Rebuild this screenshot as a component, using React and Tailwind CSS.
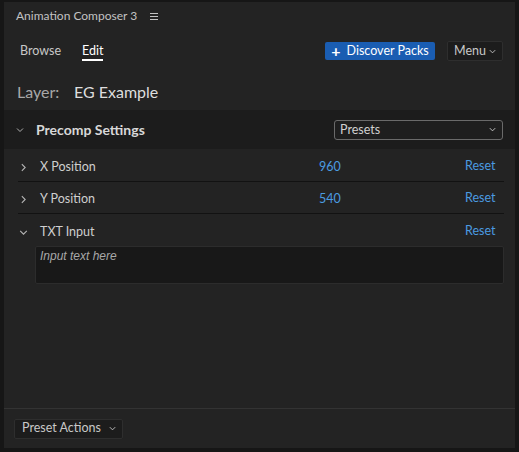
import React from "react";

const Chevron = ({ dir = "down", className = "" }) => (
  <svg viewBox="0 0 10 10" className={className} fill="none" stroke="currentColor" strokeWidth="1">
    {dir === "down" ? <path d="M2 3.5 L5 6.5 L8 3.5" /> : <path d="M3.5 2 L6.5 5 L3.5 8" />}
  </svg>
);

function Row({ label, value, open, border = true }) {
  return (
    <div className={`flex h-[32px] items-center pt-[4px] ${border ? "border-b border-[#121212]" : ""}`}>
      <span className="flex w-[22px] items-center">
        <Chevron dir={open ? "down" : "right"} className="h-[11px] w-[11px] text-[#b5b5b5]" />
      </span>
      <span className="w-[279px] text-[12.5px] text-[#cfcfcf]">{label}</span>
      <span className="w-[146px] text-[12.5px] text-[#4b9be0]">{value}</span>
      <span className="-mt-[2px] text-[12.5px] text-[#4b9be0]">Reset</span>
    </div>
  );
}

export default function App() {
  return (
    <div className="h-[452px] w-[519px] bg-[#161616] pb-[4px] pl-[4px] pr-[4px] pt-[2px]" style={{ fontFamily: 'Lato, sans-serif' }}>
      <div className="flex h-full flex-col bg-[#232323]">
        <div className="flex h-[28px] items-center pl-[12px] text-[12px] text-[#c2c2c2]">
          <span>Animation Composer 3</span>
          <span className="ml-[13px] flex flex-col gap-[2px]">
            <span className="h-[1px] w-[8px] bg-[#c2c2c2]" />
            <span className="h-[1px] w-[8px] bg-[#c2c2c2]" />
            <span className="h-[1px] w-[8px] bg-[#c2c2c2]" />
          </span>
        </div>
        <div className="flex h-[42px] items-center pl-[16px] pr-[12px]">
          <span className="mt-[1px] w-[62px] text-[12.5px] text-[#c8c8c8]">Browse</span>
          <span className="relative mt-[1px] text-[12.5px] text-white">
            Edit
            <span className="absolute left-0 right-0 top-[17px] h-[2px] bg-white" />
          </span>
          <button className="ml-auto flex h-[18px] w-[110px] items-center justify-center gap-[6px] rounded-[2px] bg-[#1a5db2] text-[12.5px] text-white">
            <span className="text-[16px] font-bold leading-none">+</span>
            <span>Discover Packs</span>
          </button>
          <button className="ml-[12px] flex h-[20px] w-[56px] items-center justify-between rounded-[2px] border border-[#2e2e2e] bg-[#1c1c1c] pl-[6px] pr-[5px] text-[12.5px] text-[#c8c8c8]">
            <span>Menu</span>
            <Chevron className="h-[9px] w-[9px]" />
          </button>
        </div>
        <div className="flex h-[38px] items-center pl-[13px] pt-[1px] text-[16px]">
          <span className="w-[57px] text-[#a8a8a8]">Layer:</span>
          <span className="text-[#dedede]">EG Example</span>
        </div>
        <div className="flex h-[39px] items-center bg-[#1c1c1c] pl-[11px] pr-[12px]">
          <Chevron className="h-[10px] w-[10px] text-[#b0b0b0]" />
          <span className="ml-[11px] text-[14px] font-bold text-[#d8d8d8]">Precomp Settings</span>
          <div className="ml-auto flex h-[20px] w-[169px] items-center justify-between rounded-[3px] border border-[#6a6a6a] bg-[#1e1e1e] pl-[5px] pr-[5px] pt-[2px] text-[12.5px] text-[#d0d0d0]">
            <span>Presets</span>
            <Chevron className="-mt-[2px] h-[9px] w-[9px]" />
          </div>
        </div>
        <div className="ml-[14px] mr-[11px] mt-[1px] flex flex-col">
          <Row label="X Position" value="960" />
          <Row label="Y Position" value="540" />
          <Row label="TXT Input" open border={false} />
          <div className="ml-[17px] h-[38px] rounded-[2px] border border-[#2c2c2c] bg-[#181818] px-[4px] text-[12px] italic text-[#a8a8a8]" style={{ fontFamily: '"Liberation Sans", sans-serif' }}>
            Input text here
          </div>
        </div>
        <div className="flex-1" />
        <div className="flex h-[40px] items-center border-t border-[#333333] pl-[10px]">
          <button className="flex h-[20px] w-[109px] items-center justify-between rounded-[2px] border border-[#2e2e2e] bg-[#1c1c1c] pl-[7px] pr-[5px] text-[12.5px] text-[#c8c8c8]">
            <span>Preset Actions</span>
            <Chevron className="h-[9px] w-[9px]" />
          </button>
        </div>
      </div>
    </div>
  );
}
